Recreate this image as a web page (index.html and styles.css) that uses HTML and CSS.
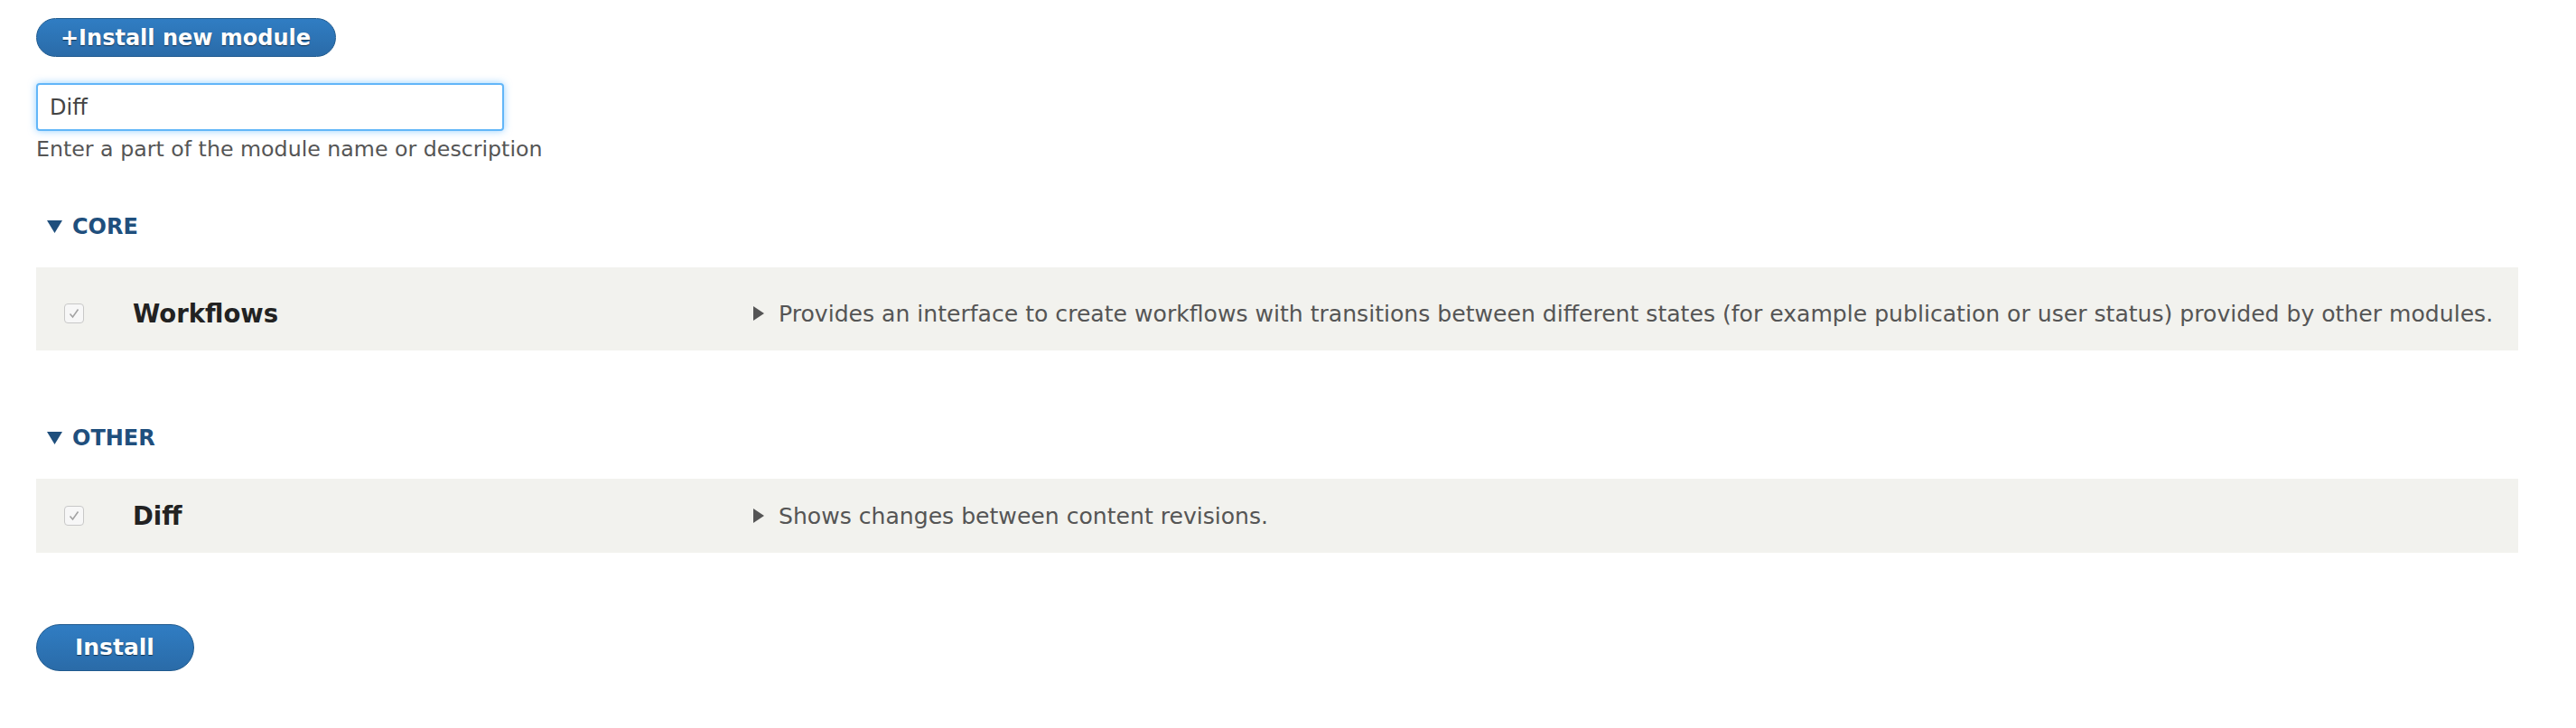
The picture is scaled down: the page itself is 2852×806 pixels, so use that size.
FILE: index.html
```html
<!DOCTYPE html>
<html lang="en">
<head>
    <meta charset="UTF-8">
    <title>Extend</title>
    <link rel="stylesheet" href="styles.css">
</head>
<body>
    <div class="page">
        <a class="button button--action" href="#">+Install new module</a>

        <div class="filter">
            <input class="filter__input" type="text" value="Diff">
            <div class="filter__help">Enter a part of the module name or description</div>
        </div>

        <details class="package package--core" open>
            <summary class="package__title">
                <svg class="package__arrow" width="17" height="14" viewBox="0 0 17 14"><path d="M0 0H17L8.5 14Z" fill="#1f4f7d"/></svg>
                CORE
            </summary>
            <div class="module-row module-row--tall">
                <div class="module-row__check">
                    <span class="checkbox">
                        <svg width="14" height="14" viewBox="0 0 14 14"><path d="M2.5 7.5L5.5 11L11.5 2.5" fill="none" stroke="#a3a3a3" stroke-width="1.6"/></svg>
                    </span>
                </div>
                <div class="module-row__name">Workflows</div>
                <div class="module-row__desc">
                    <svg class="module-row__toggle" width="12" height="16" viewBox="0 0 12 16"><path d="M0 0L12 8L0 16Z" fill="#555"/></svg>
                    Provides an interface to create workflows with transitions between different states (for example publication or user status) provided by other modules.
                </div>
            </div>
        </details>

        <details class="package package--other" open>
            <summary class="package__title">
                <svg class="package__arrow" width="17" height="14" viewBox="0 0 17 14"><path d="M0 0H17L8.5 14Z" fill="#1f4f7d"/></svg>
                OTHER
            </summary>
            <div class="module-row">
                <div class="module-row__check">
                    <span class="checkbox">
                        <svg width="14" height="14" viewBox="0 0 14 14"><path d="M2.5 7.5L5.5 11L11.5 2.5" fill="none" stroke="#a3a3a3" stroke-width="1.6"/></svg>
                    </span>
                </div>
                <div class="module-row__name">Diff</div>
                <div class="module-row__desc">
                    <svg class="module-row__toggle" width="12" height="16" viewBox="0 0 12 16"><path d="M0 0L12 8L0 16Z" fill="#555"/></svg>
                    Shows changes between content revisions.
                </div>
            </div>
        </details>

        <div class="form-actions">
            <button class="button button--primary" type="button">Install</button>
        </div>
    </div>
</body>
</html>
```

FILE: styles.css
```css
body {
    margin: 0;
    font-family: "DejaVu Sans", Verdana, sans-serif;
    color: #333;
    background-color: #fff;
}

.page {
    padding: 20px 64px 40px 40px;
}

.button {
    display: inline-block;
    box-sizing: border-box;
    font-family: "DejaVu Sans", Verdana, sans-serif;
    font-weight: bold;
    color: #fff;
    text-decoration: none;
    text-shadow: 0 1px 1px rgba(0, 0, 0, 0.55);
    border: 1px solid #1f5a8e;
    border-radius: 30px;
    background: linear-gradient(#307dc3, #2a6ba8);
    cursor: pointer;
}

.button--action {
    font-size: 24px;
    line-height: 24px;
    padding: 9px 27px 8px 26px;
}

.button--primary {
    font-size: 25px;
    line-height: 26px;
    padding: 12px 43px 12px 42px;
}

.filter {
    margin-top: 29px;
}

.filter__input {
    display: block;
    box-sizing: border-box;
    width: 518px;
    height: 53px;
    padding: 0 13px;
    border: 2px solid #62b6f8;
    border-radius: 4px;
    box-shadow: 0 0 9px rgba(64, 170, 255, 0.55);
    font-family: "DejaVu Sans", Verdana, sans-serif;
    font-size: 24px;
    color: #444;
    outline: none;
}

.filter__help {
    margin-top: 5px;
    font-size: 23.7px;
    line-height: 30px;
    color: #555;
}

.package--core {
    margin-top: 56px;
}

.package--other {
    margin-top: 82px;
}

.package__title {
    display: flex;
    align-items: center;
    gap: 11px;
    list-style: none;
    padding-left: 12px;
    font-size: 24px;
    font-weight: bold;
    line-height: 30px;
    color: #1f4f7d;
    cursor: pointer;
}

.package__title::-webkit-details-marker {
    display: none;
}

.module-row {
    display: grid;
    grid-template-columns: 107px 687px 1fr;
    align-items: center;
    height: 82px;
    margin-top: 30px;
    background-color: #f2f2ee;
}

.module-row--tall {
    height: 92px;
    padding-top: 10px;
    box-sizing: border-box;
}

.module-row__check {
    padding-left: 31px;
    display: flex;
}

.checkbox {
    display: flex;
    align-items: center;
    justify-content: center;
    box-sizing: border-box;
    width: 22px;
    height: 22px;
    border: 1px solid #c8c8c8;
    border-radius: 4px;
    background-color: #f7f7f7;
}

.module-row__name {
    font-size: 27.5px;
    font-weight: bold;
    color: #222;
}

.module-row__desc {
    display: flex;
    align-items: center;
    gap: 16px;
    font-size: 25.1px;
    color: #555;
    white-space: nowrap;
}

.form-actions {
    margin-top: 79px;
}
```
